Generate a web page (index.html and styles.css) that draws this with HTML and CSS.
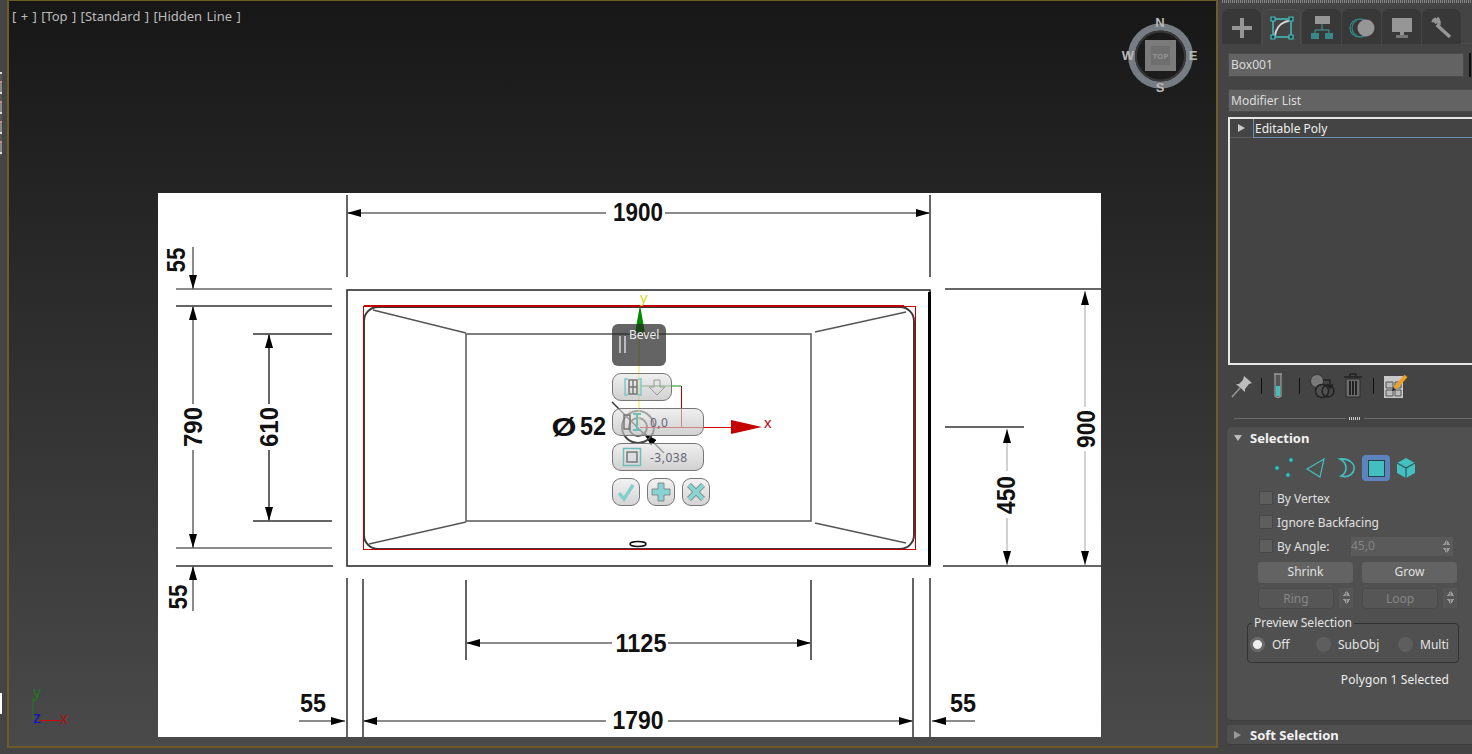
FILE: index.html
```html
<!DOCTYPE html>
<html>
<head>
	<title>3ds Max - Editable Poly</title>
	<meta charset="UTF-8">
	<link rel="stylesheet" href="styles.css">
</head>
<body>
	<div class="left-strip">
		<div class="strip-icons"></div>
		<div class="strip-white"></div>
	</div>

	<div class="viewport">
		<div class="vp-label">[ + ] [Top ] [Standard ] [Hidden Line ]</div>

		<!-- drawing plane: coordinates are screen pixels of the window -->
		<svg class="plane" viewBox="0 0 1472 754">
			<defs>
				<marker id="ah" viewBox="0 0 14 8" refX="14" refY="4" markerWidth="14" markerHeight="8" markerUnits="userSpaceOnUse" orient="auto-start-reverse">
					<path d="M0 0L14 4L0 8z" fill="#000"/>
				</marker>
			</defs>
			<rect x="158" y="193" width="943" height="544" fill="#fff"/>

			<g class="ln">
				<path d="M347 195V262M930 195V277M347 262V277"/>
				<path d="M347 213H606M665 213H930" marker-start="url(#ah)" marker-end="url(#ah)" class="thin"/>
				<path d="M176 289H332M176 548H332" class="thin"/>
				<path d="M176 306H332M253 334H332M253 521H332M176 566H333" class="dk thin"/>
				<path d="M193 247V289" marker-end="url(#ah)" class="thin"/>
				<path d="M193 306V404M193 450V548" marker-start="url(#ah)" marker-end="url(#ah)" class="thin"/>
				<path d="M269 334V404M269 450V521" marker-start="url(#ah)" marker-end="url(#ah)"/>
				<path d="M193 611V566" marker-end="url(#ah)" class="thin"/>
				<path d="M945 289H1101M943 566H1101"/>
				<path d="M945 427H1024" class="dk thin"/>
				<path d="M1085 291V407M1085 451V565" marker-start="url(#ah)" marker-end="url(#ah)" class="pale"/>
				<path d="M1007 429V471M1007 518V565" marker-start="url(#ah)" marker-end="url(#ah)" class="pale"/>
				<path d="M347 578V737M930 578V737M913 578V737"/>
				<path d="M363 579V737M466 580V660M811 580V660" class="dk thin"/>
				<path d="M466 643H612M668 643H811" marker-start="url(#ah)" marker-end="url(#ah)" class="thin"/>
				<path d="M363 721H606M668 721H913" marker-start="url(#ah)" marker-end="url(#ah)" class="thin"/>
				<path d="M299 721H345" marker-end="url(#ah)" class="thin"/>
				<path d="M975 721H932" marker-end="url(#ah)" class="thin"/>
				<path d="M612 402L650 440" class="dk thin"/>
				<path d="M664 453L644 433" marker-end="url(#ah)" class="dk thin"/>
			</g>

			<!-- tub -->
			<path class="tub-outer" d="M347 290H930V566H347z"/>
			<path class="tub-right" d="M929.5 292V565"/>
			<rect class="tub" x="364" y="307" width="550" height="242" rx="14"/>
			<rect class="tub inner" x="466" y="334" width="345" height="187"/>
			<path class="tub inner" d="M373 310L466 333M906 312L815 332M369 544L466 522M906 543L815 523"/>
			<ellipse cx="638" cy="544" rx="8" ry="2.5" fill="#fff" stroke="#111" stroke-width="1.5"/>
			<rect class="sel" x="363.5" y="306.5" width="552" height="243"/>
			<path class="sel-top" d="M364 306H904"/>

			<g class="dim">
				<text x="638" y="221" textLength="50" lengthAdjust="spacingAndGlyphs">1900</text>
				<text transform="translate(185 260) rotate(-90)" textLength="25" lengthAdjust="spacingAndGlyphs">55</text>
				<text transform="translate(202 427) rotate(-90)" textLength="40" lengthAdjust="spacingAndGlyphs">790</text>
				<text transform="translate(278 427) rotate(-90)" textLength="40" lengthAdjust="spacingAndGlyphs">610</text>
				<text transform="translate(187 597) rotate(-90)" textLength="25" lengthAdjust="spacingAndGlyphs">55</text>
				<text transform="translate(1095 429) rotate(-90)" textLength="38" lengthAdjust="spacingAndGlyphs">900</text>
				<text transform="translate(1015 495) rotate(-90)" textLength="38" lengthAdjust="spacingAndGlyphs">450</text>
				<text x="641" y="652" textLength="51" lengthAdjust="spacingAndGlyphs">1125</text>
				<text x="638" y="729" textLength="51" lengthAdjust="spacingAndGlyphs">1790</text>
				<text x="313" y="712" textLength="26" lengthAdjust="spacingAndGlyphs">55</text>
				<text x="963" y="712" textLength="26" lengthAdjust="spacingAndGlyphs">55</text>
				<text x="564" y="436" textLength="25" lengthAdjust="spacingAndGlyphs">Ø</text>
				<text x="593" y="435" textLength="26" lengthAdjust="spacingAndGlyphs">52</text>
			</g>

			<!-- gizmo -->
			<circle class="ring" cx="638" cy="427" r="16"/>
			<circle class="ring" cx="638" cy="427" r="9"/>
			<path d="M639 333V425" stroke="#e8e840" fill="none"/>
			<path d="M640.5 386H681" stroke="#0a8a0a" fill="none"/>
			<path d="M681.5 386V427" stroke="#c00000" fill="none"/>
			<path d="M640 427.5H732" stroke="#d80000" fill="none"/>
			<path d="M640 305L645 333H635z" fill="#008a00"/>
			<path d="M731 420L762 427L731 434z" fill="#c40000"/>
			<text class="axis-y" x="640" y="303">y</text>
			<text class="axis-x" x="764" y="428">x</text>
		</svg>

		<div class="caddy">
			<div class="caddy-title">
				<div class="grip"></div>
				<span>Bevel</span>
			</div>
			<div class="caddy-btn w60">
				<svg width="22" height="22" viewBox="0 0 22 22">
					<path d="M6 3H3V19H6M16 3H19V19H16" fill="none" stroke="#7cc8c8" stroke-width="1.5"/>
					<path d="M7 4H15V18H7zM11 4V18M7 11H15" fill="none" stroke="#777" stroke-width="1.5"/>
				</svg>
				<svg width="22" height="22" viewBox="0 0 22 22">
					<path d="M8 4H14V11H19L11 19L3 11H8z" fill="none" stroke="#999"/>
				</svg>
			</div>
			<div class="caddy-btn">
				<svg width="22" height="22" viewBox="0 0 22 22">
					<path d="M2 4H8V18H2z" fill="none" stroke="#777" stroke-width="1.5"/>
					<path d="M11 3H19M15 3V19M11 19H19" fill="none" stroke="#6cbcbc" stroke-width="2"/>
				</svg>
				<span class="val">0,0</span>
			</div>
			<div class="caddy-btn">
				<svg width="22" height="22" viewBox="0 0 22 22">
					<rect x="1.5" y="2.5" width="17" height="17" fill="none" stroke="#6cbcbc" stroke-width="1.5"/>
					<rect x="5" y="6" width="10" height="10" fill="#ddd" stroke="#777" stroke-width="1.5"/>
				</svg>
				<span class="val">-3,038</span>
			</div>
			<div class="caddy-row">
				<div class="caddy-sq">
					<svg width="20" height="20" viewBox="0 0 20 20"><path d="M3 11L8 17L17 3" fill="none" stroke="#86cfcf" stroke-width="3.5"/></svg>
				</div>
				<div class="caddy-sq">
					<svg width="20" height="20" viewBox="0 0 20 20"><path d="M7 1H13V7H19V13H13V19H7V13H1V7H7z" fill="#86d4d4" stroke="#777" stroke-width=".8"/></svg>
				</div>
				<div class="caddy-sq">
					<svg width="20" height="20" viewBox="0 0 20 20"><path d="M3 3L17 17M17 3L3 17" stroke="#777" stroke-width="5.5"/><path d="M3 3L17 17M17 3L3 17" stroke="#86d4d4" stroke-width="4"/></svg>
				</div>
			</div>
		</div>

		<svg class="viewcube" width="84" height="84" viewBox="0 0 84 84">
			<circle cx="42.5" cy="42" r="29" fill="none" stroke="#767c82" stroke-width="7"/>
			<circle cx="42.5" cy="42" r="24.5" fill="none" stroke="#38383a" stroke-width="2"/>
			<rect x="27" y="26" width="31" height="31" fill="#7b7b7b"/>
			<rect x="33" y="32" width="19" height="19" fill="#6f6f6f"/>
			<text x="42.5" y="45" class="cube-top">TOP</text>
			<text x="42" y="13" class="cube-dir">N</text>
			<text x="42" y="78" class="cube-dir">S</text>
			<text x="75" y="46" class="cube-dir">E</text>
			<text x="10" y="46" class="cube-dir">W</text>
		</svg>

		<svg class="tripod" width="50" height="50" viewBox="0 0 50 50">
			<path d="M7 17V40" stroke="#1e7a1e" fill="none"/>
			<path d="M14 40.5H34" stroke="#d80000" fill="none"/>
			<text x="7" y="18" class="tri-y">y</text>
			<text x="7" y="43" class="tri-z">z</text>
			<text x="34" y="44" class="tri-x">x</text>
		</svg>
	</div>

	<div class="panel">
		<div class="dots"></div>
		<div class="tabs">
			<div class="tab">
				<svg width="24" height="24" viewBox="0 0 24 24"><path d="M12 2V22M2 12H22" stroke="#969696" stroke-width="4"/></svg>
			</div>
			<div class="tab active">
				<svg width="24" height="24" viewBox="0 0 24 24">
					<path d="M3 3H21V21H3z" fill="none" stroke="#43bfc0" stroke-width="1.5"/>
					<path d="M5 20C6 12 11 6 19 5" fill="none" stroke="#d8d8d8" stroke-width="2"/>
					<path d="M1 1H5V5H1zM19 1H23V5H19zM1 19H5V23H1zM19 19H23V23H19z" fill="#2b3a3a" stroke="#43bfc0" stroke-width="1.2"/>
				</svg>
			</div>
			<div class="tab">
				<svg width="24" height="24" viewBox="0 0 24 24">
					<rect x="5" y="0" width="15" height="8" fill="#969696"/>
					<path d="M12 8V14M5 14H19V17M5 14V17" fill="none" stroke="#43a0a0"/>
					<rect x="1" y="17" width="8" height="6" fill="#378888"/>
					<rect x="15" y="17" width="8" height="6" fill="#378888"/>
				</svg>
			</div>
			<div class="tab">
				<svg width="26" height="24" viewBox="0 0 26 24">
					<circle cx="10" cy="12" r="9" fill="none" stroke="#378888" stroke-width="1.2"/>
					<circle cx="12" cy="12" r="9" fill="none" stroke="#378888" stroke-width="1.2"/>
					<circle cx="17" cy="12" r="8.5" fill="#969696"/>
				</svg>
			</div>
			<div class="tab">
				<svg width="24" height="24" viewBox="0 0 24 24">
					<rect x="2" y="2" width="20" height="14" fill="#969696"/>
					<rect x="10" y="16" width="4" height="3" fill="#969696"/>
					<rect x="6" y="19" width="12" height="3" fill="#777"/>
				</svg>
			</div>
			<div class="tab">
				<svg width="24" height="24" viewBox="0 0 24 24">
					<path d="M3 3L7 7M7 2C9 4 10 8 8 10L20 21" fill="none" stroke="#969696" stroke-width="3.5"/>
					<path d="M2 6L6 2" stroke="#969696" stroke-width="2"/>
				</svg>
			</div>
		</div>
		<div class="name-row">
			<div class="field name">Box001</div>
			<div class="swatch"></div>
		</div>
		<div class="field modlist">Modifier List</div>
		<div class="stack">
			<div class="stack-row">
				<span class="tri-right"></span>
				<span class="stack-item">Editable Poly</span>
			</div>
		</div>
		<div class="tools">
			<svg width="22" height="24" viewBox="0 0 22 24">
				<path d="M1 23L9 14" stroke="#999" stroke-width="1.5"/>
				<path d="M13 2L21 9L18 10L14 15L14 18L5 10L8 10L12 6z" fill="#bdbdbd"/>
			</svg>
			<span class="tool-sep"></span>
			<svg class="tube" width="14" height="26" viewBox="0 0 14 26">
				<path d="M3 1H11M4 1V23Q7 26 10 23V1" fill="#555" stroke="#999" stroke-width="1.3"/>
				<rect x="5" y="13" width="4" height="10" fill="#43bfc0"/>
			</svg>
			<span class="tool-sep"></span>
			<svg width="26" height="26" viewBox="0 0 26 26">
				<circle cx="8" cy="8" r="6.5" fill="#7a7a7a" stroke="#333"/>
				<path d="M14 7H21V14M18 11L21 15L24 11" fill="none" stroke="#222" stroke-width="1.5"/>
				<circle cx="13" cy="18" r="6.5" fill="#505050" stroke="#222" stroke-width="1.5"/>
				<circle cx="19" cy="18" r="6" fill="none" stroke="#222" stroke-width="1.5"/>
			</svg>
			<svg class="trash" width="20" height="26" viewBox="0 0 20 26">
				<path d="M1 4H19M7 4V1H13V4" fill="none" stroke="#222" stroke-width="1.5"/>
				<path d="M3 6H17V24H3z" fill="#6c6c6c" stroke="#2a2a2a"/>
				<path d="M7 8V22M10 8V22M13 8V22" stroke="#222" stroke-width="2"/>
			</svg>
			<span class="tool-sep"></span>
			<svg width="26" height="26" viewBox="0 0 26 26">
				<rect x="1" y="3" width="19" height="22" fill="#c8c8c8"/>
				<path d="M3 9H10V15H3zM12 9H18V15H12zM3 17H10V23H3zM12 17H18V23H12z" fill="#bbb" stroke="#555"/>
				<path d="M12 15L23 3" stroke="#f0a020" stroke-width="4"/>
				<path d="M9 18L10 14L13 17z" fill="#222"/>
			</svg>
		</div>
		<div class="splitter"><span></span><i></i><span></span></div>

		<div class="rollout">
			<div class="roll-head">
				<span class="tri-down"></span>
				<b>Selection</b>
			</div>
			<div class="sub-icons">
				<svg width="24" height="24" viewBox="0 0 24 24">
					<circle cx="17" cy="4" r="2.3" fill="#43bfc0" stroke="#2a6666"/>
					<circle cx="3" cy="12" r="2.3" fill="#43bfc0" stroke="#2a6666"/>
					<circle cx="14" cy="19" r="2.3" fill="#43bfc0" stroke="#2a6666"/>
				</svg>
				<svg width="24" height="24" viewBox="0 0 24 24">
					<path d="M20 3L3 13L16 21z" fill="none" stroke="#43bfc0" stroke-width="1.2"/>
				</svg>
				<svg width="24" height="24" viewBox="0 0 24 24">
					<path d="M6 3C15 2 21 8 20 13C19 19 13 22 7 20C11 18 12 16 12 12C12 8 10 5 6 3z" fill="none" stroke="#43bfc0" stroke-width="1.6"/>
				</svg>
				<span class="sub-active"><i></i></span>
				<svg width="24" height="24" viewBox="0 0 24 24">
					<path d="M12 2L21 7V17L12 22L3 17V7z" fill="#43bfc0"/>
					<path d="M3 7L12 12L21 7M12 12V22" fill="none" stroke="#2a5a5a" stroke-width="1.2"/>
				</svg>
			</div>
			<div class="checks">
				<label class="check"><i></i>By Vertex</label>
				<label class="check"><i></i>Ignore Backfacing</label>
				<div class="check angle">
					<label class="check angle-label"><i></i>By Angle:</label>
					<span class="spin-field">45,0<em class="spin"></em></span>
				</div>
			</div>
			<div class="btn-row">
				<div class="btn">Shrink</div>
				<div class="btn">Grow</div>
			</div>
			<div class="btn-row off">
				<div class="spin-btn"><div class="btn">Ring</div><span class="spin-box"><em class="spin"></em></span></div>
				<div class="spin-btn"><div class="btn">Loop</div><span class="spin-box"><em class="spin"></em></span></div>
			</div>
			<fieldset class="preview">
				<legend>Preview Selection</legend>
				<label class="radio on"><i></i>Off</label>
				<label class="radio"><i></i>SubObj</label>
				<label class="radio"><i></i>Multi</label>
			</fieldset>
			<div class="status">Polygon 1 Selected</div>
		</div>
		<div class="rollout closed">
			<div class="roll-head">
				<span class="tri-right dim-tri"></span>
				<b>Soft Selection</b>
			</div>
		</div>
	</div>
</body>
</html>
```
FILE: styles.css
```css
* {
	box-sizing: border-box;
}

html, body {
	height: 100%;
}

body {
	margin: 0;
	width: 1472px;
	height: 754px;
	overflow: hidden;
	display: flex;
	background-color: #444;
	color: #e4e4e4;
	font-family: "Noto Sans", sans-serif;
	font-size: 12px;
}

.left-strip {
	width: 7px;
	flex-shrink: 0;
	padding-top: 72px;
}

.strip-icons {
	width: 2px;
	height: 84px;
	background: repeating-linear-gradient(#ddd 0 2px, #555 2px 9px, #c88 9px 11px, #888 11px 20px);
}

.strip-white {
	width: 2px;
	height: 21px;
	margin-top: 537px;
	background-color: #fff;
}

.viewport {
	position: relative;
	width: 1211px;
	height: 748px;
	flex-shrink: 0;
	border: 2px solid #6e5c24;
	border-top-width: 1px;
	background: linear-gradient(#171717, #4a4a4a);
	overflow: hidden;
}

.vp-label {
	padding: 6px 0 0 3px;
	color: #bcbcbc;
	font-size: 13px;
	word-spacing: 1px;
	white-space: nowrap;
}

.plane {
	position: absolute;
	left: -9px;
	top: -1px;
	width: 1472px;
	height: 754px;
}

.ln path {
	fill: none;
	stroke: #666;
	stroke-width: 2;
}

.ln path.dk {
	stroke: #333;
}

.ln path.thin {
	stroke-width: 1.5;
}

.ln path.pale {
	stroke: #c4c4c4;
	stroke-width: 1.5;
}

.tub-outer {
	fill: none;
	stroke: #222;
	stroke-width: 1.5;
}

.tub-right {
	stroke: #000;
	stroke-width: 3;
}

.tub {
	fill: none;
	stroke: #3a3a3a;
	stroke-width: 2;
}

.tub.inner {
	stroke: #555;
	stroke-width: 1.5;
}

.sel {
	fill: none;
	stroke: #c00000;
	stroke-width: 1;
}

.sel-top {
	stroke: #c00000;
	stroke-width: 2;
}

.dim text {
	font-family: "Liberation Sans", sans-serif;
	font-weight: bold;
	font-size: 25px;
	text-anchor: middle;
	fill: #111;
}

.ring {
	fill: none;
	stroke: #444;
	stroke-width: 2;
}

.axis-y {
	font-family: "Liberation Sans", sans-serif;
	font-size: 15px;
	fill: #d8d820;
}

.axis-x {
	font-family: "Liberation Sans", sans-serif;
	font-size: 15px;
	fill: #c00000;
}

.caddy {
	position: absolute;
	left: 603px;
	top: 323px;
	width: 98px;
	display: flex;
	flex-direction: column;
	gap: 7px;
}

.caddy-title {
	position: relative;
	width: 54px;
	height: 42px;
	background-color: rgba(40, 40, 40, 0.72);
	border-radius: 6px;
	color: #eee;
}

.caddy-title span {
	position: absolute;
	left: 17px;
	top: 2px;
}

.grip {
	position: absolute;
	left: 7px;
	top: 12px;
	width: 7px;
	height: 17px;
	border-left: 2px solid #bbb;
	border-right: 2px solid #bbb;
}

.caddy-btn {
	width: 92px;
	height: 28px;
	display: flex;
	align-items: center;
	gap: 6px;
	padding-left: 9px;
	border: 1px solid #777;
	border-radius: 9px;
	background: linear-gradient(rgba(228, 228, 228, 0.6), rgba(190, 190, 190, 0.7));
}

.caddy-btn.w60 {
	width: 60px;
	gap: 2px;
}

.val {
	color: #667;
	letter-spacing: 0.5px;
}

.caddy-row {
	display: flex;
	gap: 7px;
}

.caddy-sq {
	width: 28px;
	height: 28px;
	display: flex;
	align-items: center;
	justify-content: center;
	border: 1px solid #777;
	border-radius: 9px;
	background: linear-gradient(#f2f2f2, #d4d4d4);
}

.viewcube {
	position: absolute;
	left: 1109px;
	top: 13px;
}

.cube-top {
	font-family: "DejaVu Sans", sans-serif;
	font-size: 7px;
	font-weight: bold;
	text-anchor: middle;
	fill: #8f8f8f;
}

.cube-dir {
	font-family: "Liberation Sans", sans-serif;
	font-size: 13px;
	font-weight: bold;
	text-anchor: middle;
	fill: #b8b8b8;
}

.tripod {
	position: absolute;
	left: 17px;
	top: 679px;
	font-family: "Liberation Sans", sans-serif;
	font-size: 16px;
}

.tri-y {
	fill: #1e7a1e;
}

.tri-z {
	fill: #1212c0;
}

.tri-x {
	fill: #b01010;
}

.panel {
	width: 254px;
	height: 754px;
	flex-shrink: 0;
	margin-left: 4px;
	overflow: hidden;
	background-color: #444;
}

.dots {
	height: 3px;
	margin-bottom: 6px;
	background: repeating-linear-gradient(90deg, #8a8a8a 0 1px, #444 1px 2px);
}

.tabs {
	display: flex;
	gap: 1px;
	height: 35px;
	margin-bottom: 9px;
	border-bottom: 1px solid #4c4c4c;
}

.tab {
	width: 39px;
	height: 35px;
	padding-top: 2px;
	display: flex;
	align-items: center;
	justify-content: center;
	background-color: #383838;
	border-radius: 7px 7px 0 0;
}

.tab.active {
	background-color: #444;
	border: 1px solid #4d4d4d;
	border-bottom: 0;
}

.name-row {
	display: flex;
	height: 24px;
	padding-left: 6px;
	margin-bottom: 12px;
}

.field {
	background-color: #636363;
	border: 1px solid #4a4a4a;
	color: #dcdcdc;
	padding-left: 2px;
	line-height: 22px;
}

.name {
	width: 236px;
}

.swatch {
	width: 2px;
	margin-left: 5px;
	background-color: #111;
}

.modlist {
	height: 23px;
	margin-left: 6px;
	margin-bottom: 5px;
}

.stack {
	height: 248px;
	margin-left: 6px;
	border: 2px solid #e6e6e6;
	border-right: 0;
}

.stack-row {
	display: flex;
	align-items: center;
	height: 19px;
	padding-left: 8px;
	border-bottom: 1px solid #5c5c5c;
}

.tri-right {
	width: 0;
	height: 0;
	border-left: 7px solid #c8c8c8;
	border-top: 4px solid transparent;
	border-bottom: 4px solid transparent;
	margin-right: 8px;
}

.stack-item {
	flex: 1;
	height: 19px;
	padding-left: 1px;
	line-height: 19px;
	color: #f0f0f0;
	border-left: 1px solid #6f8db0;
	border-bottom: 1px solid #6f8db0;
}

.tools {
	display: flex;
	align-items: center;
	height: 26px;
	margin-top: 8px;
	padding-left: 9px;
}

.tools svg {
	margin-right: 8px;
}

.tools .tube {
	margin-right: 14px;
}

.tools .trash {
	margin-right: 10px;
}

.tool-sep {
	width: 1px;
	height: 16px;
	background-color: #111;
	margin-right: 9px;
}

.splitter {
	display: flex;
	align-items: center;
	gap: 3px;
	height: 8px;
	margin: 15px 0 5px 12px;
}

.splitter span {
	width: 117px;
	height: 1px;
	background-color: #6c6c6c;
}

.splitter i {
	width: 13px;
	height: 3px;
	background: repeating-linear-gradient(90deg, #ccc 0 1px, #444 1px 2px);
}

.rollout {
	height: 294px;
	margin-left: 5px;
	background-color: #505050;
	border-radius: 5px 0 0 5px;
	border-bottom: 1px solid #3e3e3e;
}

.rollout.closed {
	height: 20px;
	margin-top: 4px;
	border-radius: 3px 0 0 3px;
}

.roll-head {
	display: flex;
	align-items: center;
	height: 22px;
	padding-left: 7px;
	font-size: 13px;
	color: #f2f2f2;
}

.closed .roll-head {
	height: 20px;
}

.tri-down {
	width: 0;
	height: 0;
	border-top: 6px solid #bbb;
	border-left: 4px solid transparent;
	border-right: 4px solid transparent;
	margin-right: 8px;
}

.dim-tri {
	border-left-color: #999;
	margin-right: 9px;
}

.sub-icons {
	display: flex;
	align-items: center;
	gap: 6px;
	height: 28px;
	margin-top: 5px;
	padding-left: 47px;
}

.sub-active {
	width: 28px;
	height: 26px;
	margin: 0 -2px;
	display: flex;
	align-items: center;
	justify-content: center;
	background-color: #5c83bd;
	border-radius: 4px;
}

.sub-active i {
	width: 17px;
	height: 17px;
	background-color: #43bfc0;
	border: 1px solid #244;
}

.checks {
	margin-top: 4px;
	padding-left: 32px;
}

.check {
	display: flex;
	align-items: center;
	gap: 4px;
	height: 24px;
	color: #e0e0e0;
}

.check i {
	width: 14px;
	height: 14px;
	background-color: #5e5e5e;
	border: 1px solid #484848;
}

.angle {
	gap: 0;
}

.angle-label {
	width: 92px;
}

.spin-field {
	position: relative;
	width: 102px;
	height: 19px;
	line-height: 18px;
	background-color: #5a5a5a;
	color: #858585;
}

.spin {
	position: absolute;
	right: 3px;
	top: 3px;
	width: 7px;
	height: 13px;
	background:
		linear-gradient(to top left, #999 50%, transparent 50%) left 0 / 50% 5px no-repeat,
		linear-gradient(to top right, #999 50%, transparent 50%) right 0 / 50% 5px no-repeat,
		linear-gradient(to bottom left, #999 50%, transparent 50%) left 8px / 50% 5px no-repeat,
		linear-gradient(to bottom right, #999 50%, transparent 50%) right 8px / 50% 5px no-repeat;
}

.btn-row {
	display: flex;
	gap: 9px;
	margin-top: 4px;
	padding-left: 31px;
}

.btn-row.off {
	margin-top: 5px;
}

.btn {
	width: 95px;
	height: 21px;
	line-height: 20px;
	text-align: center;
	background-color: #636363;
	border-radius: 4px;
	color: #e0e0e0;
}

.spin-btn {
	display: flex;
	gap: 5px;
	width: 95px;
}

.off .btn {
	flex: 1;
	width: auto;
	background-color: #565656;
	border: 1px solid #4a4a4a;
	color: #868686;
}

.spin-box {
	position: relative;
	width: 14px;
	height: 20px;
	background-color: #565656;
}

.preview {
	display: flex;
	height: 47px;
	margin: 7px 17px 0 20px;
	padding: 2px 0 0 2px;
	border: 1px solid #323232;
	border-radius: 4px;
}

.preview legend {
	padding: 0 2px;
	margin-left: 2px;
	line-height: 14px;
	color: #e4e4e4;
}

.radio {
	display: flex;
	align-items: center;
	gap: 7px;
	height: 24px;
}

.radio:nth-of-type(1) {
	width: 66px;
}

.radio:nth-of-type(2) {
	width: 82px;
}

.radio i {
	width: 15px;
	height: 15px;
	border-radius: 50%;
	background-color: #5e5e5e;
}

.radio.on i {
	background: radial-gradient(#eee 0 4px, #6a6a6a 5px);
}

.status {
	margin-top: 8px;
	padding-right: 27px;
	text-align: right;
	letter-spacing: 0.1px;
	color: #eee;
}
```
